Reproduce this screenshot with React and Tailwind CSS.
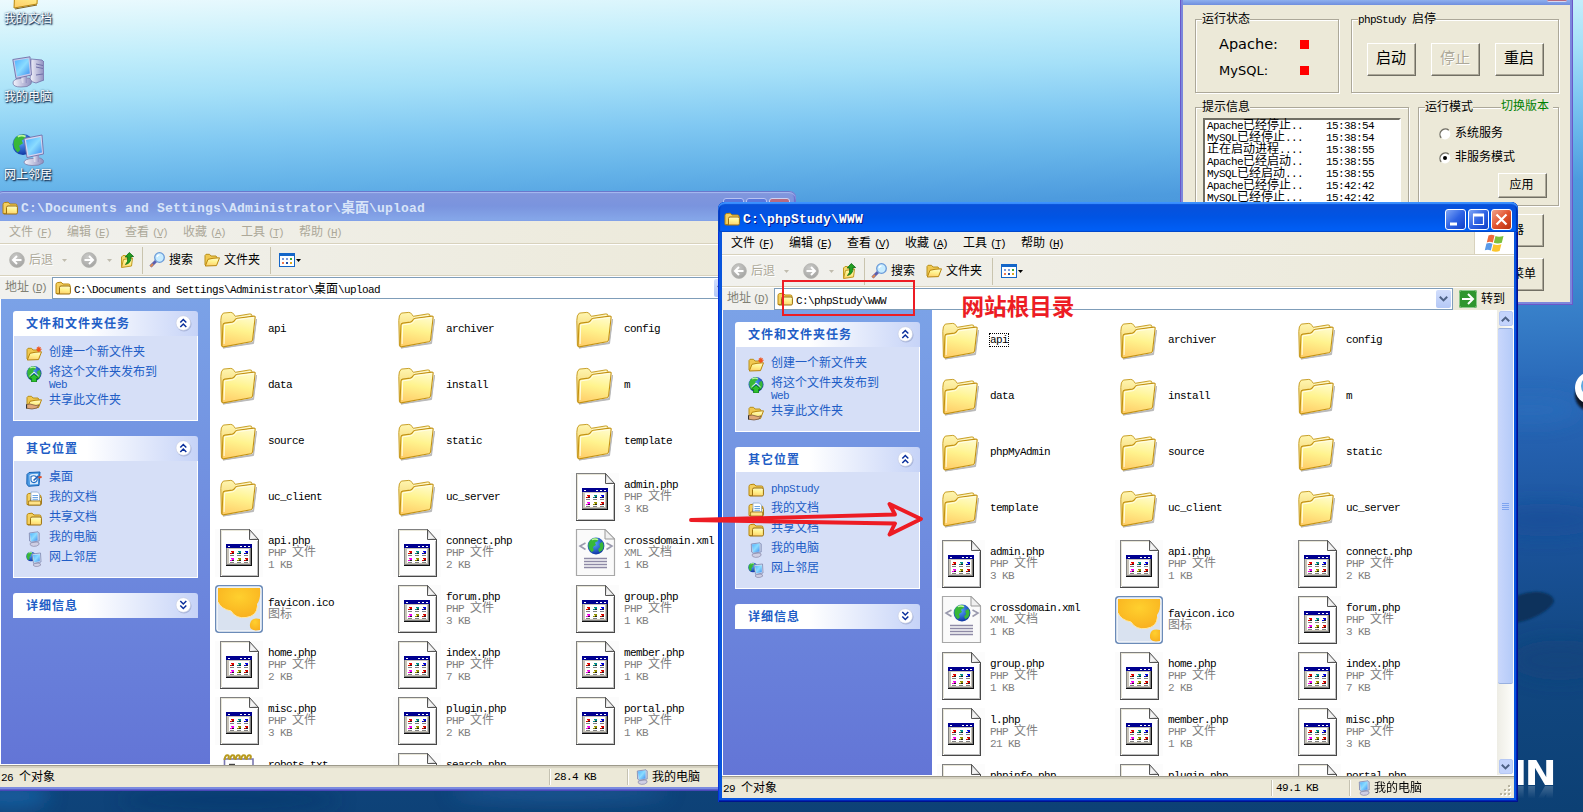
import React from "react";

/* ---------- text ---------- */

function T({ children, title }) {
  const runs = String(children).split(/([\x20-\x7e]+)/).filter(Boolean);
  return (
    <span className="whitespace-pre">
      {runs.map((r, i) =>
        /^[\x20-\x7e]/.test(r) ? (
          <span key={i} className={title ? "text-[13px] tracking-[0.2px]" : "text-[11px] tracking-[-0.6px]"}>
            {r}
          </span>
        ) : (
          <span key={i}>{r}</span>
        )
      )}
    </span>
  );
}

/* ---------- shared gradients ---------- */

function Defs() {
  return (
    <svg width="0" height="0" className="absolute">
      <defs>
        <linearGradient id="fFront" x1="0.6" y1="0" x2="0.4" y2="1">
          <stop offset="0" stopColor="#fffbc9" />
          <stop offset="0.45" stopColor="#fff38e" />
          <stop offset="1" stopColor="#ffcf6a" />
        </linearGradient>
        <linearGradient id="fBack" x1="0" y1="0" x2="0" y2="1">
          <stop offset="0" stopColor="#fff6b0" />
          <stop offset="1" stopColor="#eec04a" />
        </linearGradient>
        <linearGradient id="screen" x1="0" y1="0" x2="1" y2="1">
          <stop offset="0" stopColor="#4fb0ff" />
          <stop offset="0.5" stopColor="#8bdcff" />
          <stop offset="1" stopColor="#3d8df0" />
        </linearGradient>
        <linearGradient id="metal" x1="0" y1="0" x2="1" y2="0">
          <stop offset="0" stopColor="#f4f4fc" />
          <stop offset="1" stopColor="#8f8fc0" />
        </linearGradient>
        <linearGradient id="fold" x1="0" y1="1" x2="1" y2="0">
          <stop offset="0" stopColor="#ffffff" />
          <stop offset="1" stopColor="#8a8a8a" />
        </linearGradient>
        <radialGradient id="globe" cx="0.4" cy="0.35" r="0.7">
          <stop offset="0" stopColor="#5aa8ff" />
          <stop offset="1" stopColor="#0a2f9e" />
        </radialGradient>
        <radialGradient id="blob" cx="0.5" cy="0.3" r="0.8">
          <stop offset="0" stopColor="#ffd02e" />
          <stop offset="1" stopColor="#f8ac1c" />
        </radialGradient>
        <radialGradient id="grayBall" cx="0.4" cy="0.3" r="0.8">
          <stop offset="0" stopColor="#cacac8" />
          <stop offset="1" stopColor="#a0a09e" />
        </radialGradient>
      </defs>
    </svg>
  );
}

/* ---------- large file icons, 48px cell ---------- */

function FolderIcon() {
  return (
    <svg width="48" height="48" viewBox="0 0 48 48" className="shrink-0">
      <path d="M8 43L38 37.5L41.500 14L38.500 38.500Z" fill="#777" stroke="#8c8c8c" strokeWidth="1" opacity="0.6" />
      <g transform="translate(4.8 6.5)">
        <path d="M1 9Q.9 3.500 3.500 1.600L11 .9Q13 .9 14 2.800L15.500 4.800L30 2.400Q32.200 2.200 32.200 4.200V9L3 34.500L1.600 34Z" fill="url(#fBack)" stroke="#c9a02a" />
        <path d="M16 6.500L30.500 4" stroke="#fffce0" fill="none" />
        <path d="M3.200 13.500Q3.300 12 5 11.600L12.500 10.600Q14 10.300 15 8.600Q15.800 7.100 17.500 6.800L34 4.600Q35.600 4.500 35.300 6.200L32.800 28.300Q32.600 29.800 31 30.200L3.600 35.400Q2.100 35.500 2.200 34Z" fill="url(#fFront)" stroke="#c39214" strokeWidth="1.1" />
        <path d="M4.300 32.500L4.900 13.400L13 12.200Q15.300 11.600 16.200 9.600L17.600 8.300L34 6" stroke="#fffde6" fill="none" />
      </g>
    </svg>
  );
}

const DOTS = [
  [16, 22, "#e00000"],
  [23, 22, "#008c8c"],
  [30, 22, "#0000e0"],
  [16, 29, "#f000f0"],
  [23, 29, "#909000"],
  [30, 29, "#d00000"],
];

function PhpIcon() {
  return (
    <svg width="48" height="48" viewBox="0 0 48 48" className="shrink-0 bg-[#fcfcfc]" shapeRendering="crispEdges">
      <path d="M5 0H35L44 10V48H5Z" fill="#fff" />
      <path d="M6.500 46V1.500H34" fill="none" stroke="#e8e6d8" />
      <path d="M5.500 48V.5H35" fill="none" stroke="#808080" />
      <path d="M43.500 10V47.500H5" fill="none" stroke="#484848" />
      <path d="M42.500 12V46.500H7" fill="none" stroke="#c0c0c0" />
      <g shapeRendering="auto">
        <path d="M34.500 .5V10.500H43.500Z" fill="url(#fold)" stroke="#555" strokeWidth="1" />
        <path d="M36 3.500V9H41Z" fill="#f4f4f4" />
      </g>
      <rect x="11" y="15" width="26" height="22" fill="#111" />
      <rect x="11" y="15" width="25" height="21" fill="#808080" />
      <rect x="12" y="19" width="23" height="16" fill="#c8c4b8" />
      <rect x="14" y="20" width="20" height="14" fill="#fff" />
      <rect x="11" y="15" width="26" height="4" fill="#000090" />
      <path d="M13 17H15M25 17H27M29 17H31M33 17H35" stroke="#fff" strokeWidth="1" />
      {DOTS.map(([x, y, c], i) => (
        <g key={i}>
          <rect x={x} y={y} width="3" height="2" fill={c} />
          <rect x={x - 1} y={y + 2} width="2" height="1" fill={c} />
          <rect x={x} y={y + 1} width="1" height="1" fill="#ffe9a0" />
          <rect x={x + 1} y={y + 2} width="2" height="1" fill="#222" />
          <rect x={x - 1} y={y + 4} width="4" height="1" fill="#808080" />
        </g>
      ))}
    </svg>
  );
}

function Globe({ cx, cy, r }) {
  const s = r / 8;
  return (
    <g transform={`translate(${cx} ${cy}) scale(${s})`}>
      <circle r="8" fill="url(#globe)" />
      <path d="M-7 -3Q-5 -8 1 -7.600L2 -5L-1 -3L0 -1L-3 1L-2 4L-4 6Q-8 3 -7 -3Z" fill="#38b838" />
      <path d="M3 -2L6 -4Q8.500 0 6 4L3 6L2 3L4 1Z" fill="#38b838" />
      <path d="M-4 -6Q-1 -7.500 2 -6" stroke="#bff5a0" fill="none" strokeWidth="1.4" />
    </g>
  );
}

function XmlIcon() {
  return (
    <svg width="48" height="48" viewBox="0 0 48 48" className="shrink-0">
      <path d="M5.500 .5H34L43.500 10V46.500H5.500Z" fill="#fafafa" stroke="#a8a8a8" strokeWidth="1.2" />
      <path d="M34 .5V10H43.500Z" fill="#f0f0f0" stroke="#999" />
      <path d="M14.500 14L9 17L14.500 20.500M35.500 14L41 17L35.500 20.500" fill="none" stroke="#9a9aae" strokeWidth="1.6" />
      <Globe cx={25} cy={17} r={8.4} />
      <path d="M13 29.500H36M13 32.500H36M13 35.500H36M13 38.500H36" stroke="#8e8aa6" strokeWidth="1.5" />
    </svg>
  );
}

function IcoIcon() {
  return (
    <svg width="48" height="48" viewBox="0 0 48 48" className="shrink-0">
      <rect x=".75" y=".75" width="46.5" height="46.5" rx="3" fill="#d9e2f0" stroke="#6b8bb8" strokeWidth="1.5" />
      <rect x="2" y="2" width="44" height="44" rx="2" fill="none" stroke="#fff" />
      <path d="M3 3H45Q46 14 42 19Q43 31 31 32.500Q21 34 16 26Q6 24 3 17Z" fill="url(#blob)" />
      <path d="M3 17Q6 24 16 26Q21 34 31 32.500Q42 31 42.500 21" fill="none" stroke="#ffe9a8" />
      <path d="M45 34Q36 32 35 39Q34 45 41 45.500L45 45Z" fill="url(#blob)" />
    </svg>
  );
}

function TxtIcon() {
  return (
    <svg width="48" height="48" viewBox="0 0 48 48" className="shrink-0">
      <path d="M9.500 6H38V44H9.500Z" fill="#fff" stroke="#7a78b0" strokeWidth="1.6" />
      <path d="M14 11.500H20" stroke="#444" strokeWidth="1.4" />
      {[11, 16.5, 22, 27.5, 33].map((x) => (
        <path key={x} d={`M${x - 1.5} 7Q${x - 1} 2 ${x + 1.5} 2.2Q${x + 4} 2.5 ${x + 2} 6`} fill="none" stroke="#b89a1e" strokeWidth="2" />
      ))}
    </svg>
  );
}

/* ---------- small icons, 16px ---------- */

function MiniFolder({ children }) {
  return (
    <svg width="16" height="16" viewBox="0 0 16 16" className="shrink-0">
      <path d="M1 13.500V4.500Q1 3 2.400 2.600L6 2.200L8 4H13.500Q15 4 15 5.500V13Z" fill="#f4d060" stroke="#b8860b" />
      <path d="M4.500 13.800V7.500Q4.500 6 6 6H14Q15.400 6 15.400 7.300V12.800Q15.400 13.900 14.200 14H1.800" fill="url(#fFront)" stroke="#9a7010" />
      {children}
    </svg>
  );
}

function OpenFolder({ children }) {
  return (
    <svg width="16" height="16" viewBox="0 0 16 16" className="shrink-0">
      <path d="M1 13V3.500L2 2.300H5.500L7 4H12L13 5.500V8" fill="#f0c850" stroke="#b8901c" />
      <path d="M1.300 14L4 7.300L9 6.300L15.500 5.800L12.500 13.600Z" fill="url(#fFront)" stroke="#b8860b" />
      {children}
    </svg>
  );
}

function ComputerMini() {
  return (
    <svg width="16" height="16" viewBox="0 0 16 16" className="shrink-0">
      <path d="M4 13Q4 11.500 7 11.500L11 11Q14 11.500 13 13.500Q11 15.600 7.500 15.400Q4 15 4 13Z" fill="#cfcfe4" stroke="#8888a8" strokeWidth=".7" />
      <path d="M3.300 2L12 .8L13.200 2V10L5 11.200L3.600 10Z" fill="#c6cfe8" stroke="#7b86b0" strokeWidth=".8" />
      <path d="M4 2.500L11.500 1.500V9.500L5 10.500Z" fill="url(#screen)" />
    </svg>
  );
}

function NetworkMini() {
  return (
    <svg width="16" height="16" viewBox="0 0 16 16" className="shrink-0">
      <Globe cx={5} cy={5.5} r={4.8} />
      <path d="M7 14Q8 12 12 12Q15.500 12.500 14.500 14.300Q12 16 9 15.400Z" fill="#cfcfe4" stroke="#8888a8" strokeWidth=".7" />
      <path d="M6 3L14.500 2L15 11L7.500 12.400Z" fill="#dfe6f6" stroke="#7b86b0" strokeWidth=".8" />
      <path d="M7 4L13.800 3.200V10.200L8.200 11.300Z" fill="url(#screen)" />
    </svg>
  );
}

function DesktopMini() {
  return (
    <svg width="16" height="16" viewBox="0 0 16 16" className="shrink-0">
      <path d="M1 3.500L3 1.500L14 1L13 14.500L2.500 15.300L.8 13Z" fill="#4a9ae4" stroke="#1760b0" />
      <path d="M3.500 4L6 3L12 2.700V13L4 13.500Z" fill="#dcecfc" />
      <path d="M5 5.500Q9 3.500 11 6.500Q12 11 8 11.600Q4.600 11.500 5 8Z" fill="#fff" stroke="#1c6cc4" strokeWidth="1.1" />
      <path d="M7.500 9.500L12.500 4.800" stroke="#2160b8" strokeWidth="1.6" />
      <path d="M12.400 6.400L15.600 6" stroke="#e0502a" strokeWidth="2" />
    </svg>
  );
}

function DocsMini() {
  return (
    <MiniFolder>
      <path d="M5 1H11.500L13.500 3V10H5Z" fill="#fff" stroke="#8aa8d0" strokeWidth=".8" />
      <path d="M6.500 4.500H12M6.500 6.500H12M6.500 8.300H12" stroke="#5c9be0" strokeWidth=".9" />
      <path d="M2.600 14V10H14.600V14Z" fill="#ffe38a" stroke="#9a7010" strokeWidth=".8" />
    </MiniFolder>
  );
}

const TaskIcons = {
  create: () => (
    <OpenFolder>
      <path d="M12.800 .6V6M10.200 3.200H15.600M11 1.400L14.600 5M14.600 1.400L11 5" stroke="#f0541c" strokeWidth="1.1" />
    </OpenFolder>
  ),
  publish: () => (
    <svg width="16" height="16" viewBox="0 0 16 16" className="shrink-0">
      <Globe cx={8} cy={7.5} r={7.5} />
      <path d="M8 8L12.800 12.500H10.500V16H5.600V12.500H3.200Z" fill="#2fc02f" stroke="#0b7a14" strokeWidth=".8" />
      <path d="M3.500 10L8 6L12.600 10" fill="none" stroke="#e8ffe8" strokeWidth="1" />
    </svg>
  ),
  share: () => (
    <OpenFolder>
      <path d="M.5 10.500L4 10L10 11.500L13 10.800L11 14L6 15L.5 14.200Z" fill="#e0a878" stroke="#6b4a30" strokeWidth=".7" />
      <path d="M.3 10.500V14.500" stroke="#333" strokeWidth="1.6" />
    </OpenFolder>
  ),
  desktop: DesktopMini,
  folder: MiniFolder,
  docs: DocsMini,
  computer: ComputerMini,
  network: NetworkMini,
};

function Ball({ flip }) {
  return (
    <svg width="16" height="16" viewBox="0 0 16 16" className="shrink-0">
      <circle cx="8" cy="8" r="7.4" fill="url(#grayBall)" stroke="#b5b5b1" strokeWidth=".8" />
      <g transform={flip ? "translate(16 0) scale(-1 1)" : undefined}>
        <path d="M12.500 8H4.500M8 4L4 8L8 12" fill="none" stroke="#fff" strokeWidth="2" />
      </g>
    </svg>
  );
}

function Caret({ color }) {
  return (
    <svg width="5" height="3" viewBox="0 0 5 3" className="shrink-0">
      <path d="M0 0H5L2.500 3Z" fill={color} />
    </svg>
  );
}

/* ---------- explorer window ---------- */

const MENU = [
  ["文件", "F"],
  ["编辑", "E"],
  ["查看", "V"],
  ["收藏", "A"],
  ["工具", "T"],
  ["帮助", "H"],
];

function TitleButton({ kind, active }) {
  const tone =
    kind === "close"
      ? active
        ? "border-white bg-linear-to-br from-[#f0a088] via-[#e2532e] to-[#b8300c]"
        : "border-[#cdd3f4] bg-[#b86a80]"
      : active
      ? "border-white bg-linear-to-br from-[#7fa4f4] via-[#2f63e4] to-[#0f3fc8]"
      : "border-[#b9c4f2] bg-[#5a76dc]";
  return (
    <div className={`flex h-[21px] w-[21px] items-center justify-center rounded-[3px] border ${tone}`}>
      <svg width="15" height="15" viewBox="0 0 15 15">
        {kind === "min" && <path d="M2 12H9" stroke="#fff" strokeWidth="3" />}
        {kind === "max" && <path d="M2 2.500H13M2.500 2V12.500H12.500V2" stroke="#fff" strokeWidth="1.2" fill="none" />}
        {kind === "max" && <path d="M2 3H13" stroke="#fff" strokeWidth="3" />}
        {kind === "close" && <path d="M2.500 2.500L12.500 12.500M12.500 2.500L2.500 12.500" stroke="#fff" strokeWidth="2.2" />}
      </svg>
    </div>
  );
}

function Panel({ title, down, items, bodyClass }) {
  return (
    <div className="w-[185px]">
      <div className="flex h-[25px] items-center justify-between rounded-t-[3px] bg-linear-to-r from-white from-40% to-[#c6d3f7] pr-1.5 pl-[13px]">
        <span className="pt-0.5 text-[12px] font-bold tracking-[1px] text-[#215dc6]">{title}</span>
        <svg width="17" height="17" viewBox="0 0 17 17">
          <circle cx="9" cy="9" r="7.6" fill="#a9b6dc" />
          <circle cx="8.3" cy="8" r="7.3" fill="#fff" stroke="#c4cbe0" strokeWidth=".6" />
          <path
            d={down ? "M5.3 4L8.3 7L11.3 4M5.3 8.5L8.3 11.5L11.3 8.5" : "M5.3 7.5L8.3 4.5L11.3 7.5M5.3 12L8.3 9L11.3 12"}
            fill="none"
            stroke="#0a2f9c"
            strokeWidth="1.5"
          />
        </svg>
      </div>
      {items && (
        <div className={`flex flex-col gap-1 border border-t-0 border-white bg-[#d6dff7] pt-[10px] pl-3 ${bodyClass}`}>
          {items.map(([icon, text, second]) => {
            const Icon = TaskIcons[icon];
            return (
              <div key={text} className="flex gap-[7px] text-[#215dc6]">
                <Icon />
                <div className={second ? "flex h-[24px] flex-col pt-px" : "h-4 pt-px"}>
                  <T>{text}</T>
                  {second && <T>{second}</T>}
                </div>
              </div>
            );
          })}
        </div>
      )}
    </div>
  );
}

function Item({ name, kb, focused }) {
  const ext = name.split(".")[1];
  const kinds = { php: [PhpIcon, "PHP 文件"], xml: [XmlIcon, "XML 文档"], ico: [IcoIcon, "图标"], txt: [TxtIcon, "文本文档"] };
  const [Icon, label] = ext ? kinds[ext] : [FolderIcon, null];
  return (
    <div className="flex h-12 w-[178px] items-center gap-[5px]">
      <Icon />
      <div className="flex flex-col items-start text-black">
        <span className={focused ? "outline-1 outline-dotted outline-black" : undefined}>
          <T>{name}</T>
        </span>
        {label && (
          <span className="text-[#808080]">
            <T>{label}</T>
          </span>
        )}
        {kb && (
          <span className="text-[#808080]">
            <T>{kb + " KB"}</T>
          </span>
        )}
      </div>
    </div>
  );
}

function Explorer({ active, place, path, places, files, focused, count, size }) {
  return (
    <section
      className={`absolute flex h-[600px] w-[800px] flex-col rounded-t-[7px] ${place} ${
        active
          ? "bg-[#0855dd] shadow-[inset_1px_0_0_#0831d9,inset_-1px_-1px_0_#00138c,inset_-2px_-2px_0_#0024b8]"
          : "bg-[#7b8be0] shadow-[inset_-1px_-1px_0_#4a48b8,inset_-2px_-2px_0_#5c62cc]"
      }`}
    >
      <header
        className={`flex h-[30px] shrink-0 items-center gap-[3px] rounded-t-[7px] pt-1 pr-1.5 pl-1.5 ${
          active
            ? "bg-linear-to-b from-[#0a50d8] via-[#0054e4] to-[#0060f8] shadow-[inset_0_2px_1px_#3c92ff,inset_0_-1px_1px_#0046c8,inset_2px_0_1px_#0038c0,inset_-2px_0_1px_#0030b0]"
            : "bg-linear-to-b from-[#8296dc] via-[#7a94de] to-[#86a8ea] shadow-[inset_0_1px_0_#6a78cc,inset_0_2px_1px_#a8baf0,inset_-2px_0_1px_#6a6ed0]"
        }`}
      >
        <MiniFolder />
        <span
          className={`grow text-[14px] leading-[16px] font-bold ${
            active ? "text-white [text-shadow:1px_1px_0_#0a1883]" : "text-[#d8e4f8]"
          }`}
        >
          <T title>{path}</T>
        </span>
        <div className="flex gap-0.5 pt-px">
          <TitleButton kind="min" active={active} />
          <TitleButton kind="max" active={active} />
          <TitleButton kind="close" active={active} />
        </div>
      </header>

      <div className="mx-1 mb-1 flex h-[566px] flex-col bg-linear-to-r from-[#f1f1ee] to-[#ece9d8]">
        <nav className="flex h-[23px] shrink-0 items-stretch border-b border-[#d8d2bd] pl-[9px]">
          {MENU.map(([label, key]) => (
            <span key={key} className={`flex w-[58px] items-center gap-[3px] pt-0.5 ${active ? "text-black" : "text-[#aca899]"}`}>
              {label}
              <span className="text-[11px] tracking-[-1.6px]">
                (<u className="underline-offset-1">{key}</u>)
              </span>
            </span>
          ))}
          <span className="grow" />
          <span className="flex w-10 items-center justify-center border-l border-[#d8d2bd] bg-white">
            <svg width="21" height="19" viewBox="0 0 21 19">
              <path d="M4.500 1.500Q7.500 0 10.500 1.600L8.800 8.600Q6 7.200 2.800 8.400Z" fill="#ee6a3c" />
              <path d="M11.500 2Q14.500 3.600 19.500 2L17.800 8.800Q14 10.200 9.800 8.800Z" fill="#7cc03c" />
              <path d="M2.400 9.600Q5.500 8.400 8.500 9.800L6.800 16.600Q4 15 .8 16.200Z" fill="#5a9ae8" />
              <path d="M9.400 10.200Q13 11.800 17.400 10.200L15.600 17Q12 18.600 7.800 17Z" fill="#fbc52c" />
            </svg>
          </span>
        </nav>

        <div className="flex h-8 shrink-0 items-center border-t border-b border-t-white border-b-[#d8d2bd] pl-[9px]">
          <Ball />
          <span className="ml-1 w-[33px] pt-0.5 text-[#aca899] [text-shadow:1px_1px_0_#fff]">后退</span>
          <Caret color="#c0bcae" />
          <span className="ml-[14px] flex">
            <Ball flip />
          </span>
          <span className="ml-[10px] flex">
            <Caret color="#c0bcae" />
          </span>
          <span className="ml-[7px] flex">
            <svg width="16" height="18" viewBox="0 0 16 18">
              <path d="M2.500 16V6L4 4.500H6.500L7.500 6H12V9" fill="#f4d870" stroke="#c09a20" />
              <path d="M2.500 16.500L4.500 8.500L13.500 7L12.500 15Z" fill="url(#fFront)" stroke="#c09a20" />
              <path d="M6.500 13.500Q9.500 11 8.600 6H6.200L10.300 1.500L14.600 5.500H12Q12.500 12 6.500 13.500Z" fill="#22a022" stroke="#0c6a10" strokeWidth=".8" />
            </svg>
          </span>
          <span className="ml-[7px] h-[27px] w-px bg-[#c9c4ae]" />
          <span className="ml-1.5 flex">
            <svg width="17" height="16" viewBox="0 0 17 16">
              <path d="M1.500 14.500L7 9" stroke="#5b5fae" strokeWidth="3" />
              <path d="M1.500 14.500L4 12" stroke="#e08a50" strokeWidth="2" />
              <circle cx="10.500" cy="5.500" r="4.800" fill="#c8ecff" stroke="#6a9ad8" strokeWidth="1.3" />
              <path d="M8 5Q8.500 3 10.500 2.800" stroke="#fff" fill="none" strokeWidth="1.3" />
            </svg>
          </span>
          <span className="ml-[3px] w-[35px] pt-0.5 text-black">搜索</span>
          <OpenFolder />
          <span className="ml-1 w-[46px] pt-0.5 text-black">文件夹</span>
          <span className="h-[27px] w-px bg-[#c9c4ae]" />
          <span className="ml-2 flex">
            <svg width="16" height="14" viewBox="0 0 16 14" shapeRendering="crispEdges">
              <rect width="16" height="14" fill="#1466c8" />
              <rect x="1" y="3" width="14" height="10" fill="#fff" />
              <path d="M3 6H5M7 6H9" stroke="#7a9ad8" strokeWidth="2" />
              <path d="M11 6H13" stroke="#3aa83a" strokeWidth="2" />
              <path d="M3 10H5" stroke="#f07a50" strokeWidth="2" />
              <path d="M7 10H9" stroke="#2050a8" strokeWidth="2" />
              <path d="M11 10H13" stroke="#e0a820" strokeWidth="2" />
            </svg>
          </span>
          <span className="ml-px flex">
            <Caret color="#000" />
          </span>
        </div>

        <div className="flex h-[23px] shrink-0 border-t border-white">
          <span className="flex w-[52px] items-center gap-0.5 pb-px pl-[5px] text-[#808074]">
            地址
            <span className="text-[11px] tracking-[-1.6px]">
              (<u className="underline-offset-1">D</u>)
            </span>
          </span>
          <div className="flex h-[22px] w-[679px] items-center border border-[#7f9db9] bg-white pr-px pl-0.5 text-black">
            <MiniFolder />
            <span className="ml-[3px] grow pt-[3px]">
              <T>{path}</T>
            </span>
            <span className="flex h-[18px] w-[15px] items-center justify-center rounded-[2px] bg-linear-to-b from-[#d2defc] to-[#b4c8f6]">
              <svg width="9" height="6" viewBox="0 0 9 6">
                <path d="M.8 .8L4.500 4.400L8.200 .8" fill="none" stroke="#4d6185" strokeWidth="2" />
              </svg>
            </span>
          </div>
          <span className="flex items-center gap-1 pl-[6px] text-black">
            <svg width="18" height="18" viewBox="0 0 18 18">
              <rect width="18" height="18" rx="2" fill="#2f962f" />
              <rect x=".5" y=".5" width="17" height="17" rx="2" fill="none" stroke="#8cc88c" />
              <path d="M3 9H14M9 4L14 9L9 14" fill="none" stroke="#fff" strokeWidth="2" />
            </svg>
            <span className="pt-0.5">转到</span>
          </span>
        </div>

        <div className="flex h-[466px] shrink-0 bg-white">
          <aside className="ml-px flex h-[465px] w-[209px] shrink-0 flex-col gap-[15px] bg-linear-to-b from-[#7ba2e7] to-[#6375d6] pt-3 pl-3">
            <Panel
              title="文件和文件夹任务"
              bodyClass="h-[85px]"
              items={[
                ["create", "创建一个新文件夹"],
                ["publish", "将这个文件夹发布到", "Web"],
                ["share", "共享此文件夹"],
              ]}
            />
            <Panel title="其它位置" bodyClass="h-[117px]" items={places} />
            <Panel title="详细信息" down />
          </aside>
          <div className="flex h-[466px] w-[565px] flex-wrap content-start gap-y-2 overflow-hidden pt-1.5 pl-[5px]">
            {files.map(([name, kb]) => (
              <Item key={name} name={name} kb={kb} focused={focused === name} />
            ))}
          </div>
          <div className="flex h-[465px] w-[17px] flex-col items-center bg-linear-to-r from-[#eeede5] to-[#fefefb] pt-px">
            <span className="flex h-[15px] w-[14px] items-center justify-center rounded-[2px] border border-[#b6c8f4] bg-[#c4d4fc]">
              <svg width="9" height="6" viewBox="0 0 9 6">
                <path d="M.8 5.200L4.500 1.600L8.200 5.200" fill="none" stroke="#4d6185" strokeWidth="2" />
              </svg>
            </span>
            <span className="mt-0.5 flex h-[356px] w-[15px] flex-col items-center justify-center gap-px rounded-[2px] border-y border-[#98b0e0] bg-linear-to-r from-[#c9d7fc] to-[#b4caf8]">
              <i className="h-px w-[7px] bg-[#7ea4f0]" />
              <i className="h-px w-[7px] bg-[#7ea4f0]" />
              <i className="h-px w-[7px] bg-[#7ea4f0]" />
              <i className="h-px w-[7px] bg-[#7ea4f0]" />
            </span>
            <span className="mt-auto mb-px flex h-[15px] w-[14px] items-center justify-center rounded-[2px] border border-[#b6c8f4] bg-[#c4d4fc]">
              <svg width="9" height="6" viewBox="0 0 9 6">
                <path d="M.8 .8L4.500 4.400L8.200 .8" fill="none" stroke="#4d6185" strokeWidth="2" />
              </svg>
            </span>
          </div>
        </div>

        <footer className="flex h-[22px] shrink-0 items-center border-t border-[#9d9a8b] bg-[#ece9d8] pl-px text-black shadow-[inset_0_2px_1px_#d4d0c0]">
          <span className="w-[548px] pt-0.5">
            <T>{count + " 个对象"}</T>
          </span>
          <span className="flex h-4 w-[78px] items-center border-l border-[#c5c2b2] pt-px pl-1 shadow-[inset_1px_0_0_#fff]">
            <T>{size + " KB"}</T>
          </span>
          <span className="flex h-4 w-[150px] items-center gap-0.5 border-l border-[#c5c2b2] pl-1.5 shadow-[inset_1px_0_0_#fff]">
            <ComputerMini />
            <span className="pt-0.5">我的电脑</span>
          </span>
          <svg width="13" height="13" viewBox="0 0 13 13" className="mt-1.5">
            {[[9, 1], [5, 5], [9, 5], [1, 9], [5, 9], [9, 9]].map(([x, y]) => (
              <g key={`${x}-${y}`}>
                <rect x={x + 1} y={y + 1} width="2" height="2" fill="#fff" />
                <rect x={x} y={y} width="2" height="2" fill="#b8b4a0" />
              </g>
            ))}
          </svg>
        </footer>
      </div>
    </section>
  );
}

/* ---------- phpStudy window ---------- */

function Group({ title, extra, className, children }) {
  return (
    <fieldset className={`min-w-0 border border-[#aca899] shadow-[1px_1px_0_#fff,inset_1px_1px_0_#fff] ${className}`}>
      <legend className="ml-1.5 flex h-3 items-center pt-px">
        <span className="bg-[#ece9d8] text-black">
          <T>{title}</T>
        </span>
      </legend>
      {extra}
      {children}
    </fieldset>
  );
}

function Btn({ className, children }) {
  return (
    <div
      className={`flex items-center border border-t-white border-r-[#716f64] border-b-[#716f64] border-l-white bg-[#ece9d8] shadow-[inset_-1px_-1px_0_#aca899] ${className}`}
    >
      {children}
    </div>
  );
}

function Radio({ on, children }) {
  return (
    <div className="flex h-6 items-center gap-1">
      <svg width="12" height="12" viewBox="0 0 12 12">
        <circle cx="6" cy="6" r="5.4" fill="#fff" />
        <path d="M2.200 9.800A5.400 5.400 0 0 1 9.800 2.200" fill="none" stroke="#716f64" strokeWidth="1.3" />
        {on && <circle cx="6" cy="6" r="2" fill="#000" />}
      </svg>
      {children}
    </div>
  );
}

const LOG = [
  ["Apache已经停止..", "15:38:54"],
  ["MySQL已经停止...", "15:38:54"],
  ["正在启动进程....", "15:38:55"],
  ["Apache已经启动..", "15:38:55"],
  ["MySQL已经启动...", "15:38:55"],
  ["Apache已经停止..", "15:42:42"],
  ["MySQL已经停止...", "15:42:42"],
];

function PhpStudy() {
  return (
    <section className="absolute top-0 left-[1180px] flex h-[305px] w-[393px] flex-col border-x border-b border-[#6a58c8] bg-[#7b87dc] px-0.5 pb-0.5 text-black">
      <div className="flex h-[5px] shrink-0 justify-end bg-linear-to-b from-[#8fb0ee] to-[#6f8ede] pr-[3px]">
        <span className="h-[2px] w-5 rounded-b-[2px] border-b border-[#d8d8f0] bg-[#b86a80]" />
      </div>
      <div className="h-[297px] bg-[#ece9d8] pt-2 pl-3">
        <div className="flex gap-3">
          <Group title="运行状态" className="h-[80px] w-[144px]">
            <div className="grid grid-cols-[81px_9px] gap-y-1 pt-[7px] pl-[23px] font-['DejaVu_Sans',sans-serif]">
              <span className="flex h-[23px] items-center text-[14.5px]">Apache:</span>
              <i className="mt-2 h-[9px] w-[9px] bg-[#ff0000]" />
              <span className="flex h-[23px] items-center text-[13px]">MySQL:</span>
              <i className="mt-[7px] h-[9px] w-[9px] bg-[#ff0000]" />
            </div>
          </Group>
          <Group title="phpStudy 启停" className="h-[80px] w-[208px]">
            <div className="flex gap-[15px] pt-[18px] pl-[15px] text-[15px]">
              <Btn className="h-[33px] w-[49px] justify-center pr-px">启动</Btn>
              <Btn className="h-[33px] w-[49px] justify-center pr-px text-[#aca899] [text-shadow:1px_1px_0_#fff]">停止</Btn>
              <Btn className="h-[33px] w-[49px] justify-center pr-px">重启</Btn>
            </div>
          </Group>
        </div>
        <div className="mt-2 flex gap-[9px]">
          <Group title="提示信息" className="h-[190px] w-[214px]">
            <div className="mt-[5px] ml-[7px] h-[160px] w-[198px] border-2 border-t-[#716f64] border-r-white border-b-white border-l-[#716f64] bg-white pl-0.5">
              {LOG.map(([msg, time], i) => (
                <div key={i} className="flex h-3 leading-3">
                  <span className="w-[119px]">
                    <T>{msg}</T>
                  </span>
                  <T>{time}</T>
                </div>
              ))}
            </div>
          </Group>
          <div className="w-[141px]">
            <Group
              title="运行模式"
              className="h-[105px] w-[141px]"
              extra={
                <div className="-mt-3 ml-[82px] flex h-3 w-[52px] items-center bg-[#ece9d8] text-[#008000]">切换版本</div>
              }
            >
              <div className="flex flex-col pt-[9px] pl-5">
                <Radio>系统服务</Radio>
                <Radio on>非服务模式</Radio>
              </div>
              <Btn className="mt-[3px] ml-[79px] h-[25px] w-[49px] justify-center pr-0.5">应用</Btn>
            </Group>
            <Btn className="mt-2 h-[33px] w-[126px] justify-end pr-[19px]">
              <T>MySQL管理器</T>
            </Btn>
            <Btn className="mt-[11px] h-[33px] w-[126px] justify-end pr-[7px]">其他选项菜单</Btn>
          </div>
        </div>
      </div>
    </section>
  );
}

/* ---------- desktop ---------- */

function Computer32() {
  return (
    <svg width="32" height="32" viewBox="0 0 32 32">
      <path d="M19 3L30 4L32 6V24L24 27L18 25Z" fill="url(#metal)" stroke="#6f6fa8" strokeWidth=".8" />
      <path d="M24 8L31 9.500M24 11L31 12.500M24 19L31 18" stroke="#7070a8" />
      <path d="M1 27Q1 23 8 22.500L17 22Q21 24 19 28Q16 31.500 9 31Q1 31 1 27Z" fill="url(#metal)" stroke="#7c7ca8" strokeWidth=".8" />
      <path d="M9 20H15V27H10Z" fill="url(#metal)" />
      <path d="M.8 3.500L18 .8L19.500 19L4 22.500Z" fill="#c9c9ea" stroke="#6f6fa8" strokeWidth=".9" />
      <path d="M2.600 4.800L16.500 2.600L17.800 17.500L5 20.500Z" fill="url(#screen)" />
    </svg>
  );
}

function Network32() {
  return (
    <svg width="32" height="32" viewBox="0 0 32 32">
      <Globe cx={11} cy={10.5} r={10.5} />
      <path d="M12 28Q13 25 20 24.500L28 24Q33 26 31 29Q27 32 20 31.500Q12 31 12 28Z" fill="url(#metal)" stroke="#7c7ca8" strokeWidth=".8" />
      <path d="M21 20H27V28H22Z" fill="url(#metal)" />
      <path d="M12 4.500L30 1L31.500 20L15 23.500Z" fill="#d5d5f0" stroke="#6f6fa8" strokeWidth=".9" />
      <path d="M14 6L28.600 3L30 18.500L16.500 21.500Z" fill="url(#screen)" />
    </svg>
  );
}

function DesktopIcon({ label, children }) {
  return (
    <div className="flex h-[78px] w-14 flex-col items-center gap-1">
      {children}
      <span className="text-[12px] leading-3 text-white [text-shadow:1px_1px_1px_#1c3a5c,1px_1px_2px_#24486c,0_0_2px_#4a6a88]">{label}</span>
    </div>
  );
}

function Wallpaper() {
  return (
    <svg width="1583" height="812" viewBox="0 0 1583 812" className="absolute top-0 left-0">
      <defs>
        <filter id="soft">
          <feGaussianBlur stdDeviation="9" />
        </filter>
        <filter id="edge">
          <feGaussianBlur stdDeviation="1" />
        </filter>
      </defs>
      <g filter="url(#soft)">
        <ellipse cx="230" cy="800" rx="110" ry="12" fill="#0d3468" opacity=".45" />
        <ellipse cx="560" cy="793" rx="110" ry="6" fill="#2f6fb4" opacity=".6" />
        <ellipse cx="10" cy="796" rx="40" ry="12" fill="#1c64a8" opacity=".8" />
        <ellipse cx="1545" cy="520" rx="60" ry="16" fill="#184a96" opacity=".5" />
        <ellipse cx="1530" cy="410" rx="50" ry="14" fill="#2d70c0" opacity=".5" />
        <ellipse cx="1560" cy="660" rx="50" ry="20" fill="#123f7a" opacity=".5" />
      </g>
      <path d="M1500 606Q1520 590 1540 592Q1554 594 1554 602Q1548 612 1530 619Q1514 625 1500 624Z" fill="#08335c" filter="url(#edge)" />
      <ellipse cx="1590" cy="395" rx="15" ry="16" fill="#0a1626" filter="url(#edge)" />
      <ellipse cx="1590" cy="388" rx="15" ry="16" fill="#fff" />
      <ellipse cx="1590" cy="386" rx="9" ry="10" fill="#5aa8e0" />
    </svg>
  );
}

const A_FILES = [
  ["api"], ["archiver"], ["config"],
  ["data"], ["install"], ["m"],
  ["source"], ["static"], ["template"],
  ["uc_client"], ["uc_server"], ["admin.php", 3],
  ["api.php", 1], ["connect.php", 2], ["crossdomain.xml", 1],
  ["favicon.ico"], ["forum.php", 3], ["group.php", 1],
  ["home.php", 2], ["index.php", 7], ["member.php", 1],
  ["misc.php", 3], ["plugin.php", 2], ["portal.php", 1],
  ["robots.txt", 1], ["search.php", 1],
];

const B_FILES = [
  ["api"], ["archiver"], ["config"],
  ["data"], ["install"], ["m"],
  ["phpMyAdmin"], ["source"], ["static"],
  ["template"], ["uc_client"], ["uc_server"],
  ["admin.php", 3], ["api.php", 1], ["connect.php", 2],
  ["crossdomain.xml", 1], ["favicon.ico"], ["forum.php", 3],
  ["group.php", 1], ["home.php", 2], ["index.php", 7],
  ["l.php", 21], ["member.php", 1], ["misc.php", 3],
  ["phpinfo.php", 1], ["plugin.php", 2], ["portal.php", 1],
];

const COMMON = [
  ["docs", "我的文档"],
  ["folder", "共享文档"],
  ["computer", "我的电脑"],
  ["network", "网上邻居"],
];

export default function App() {
  return (
    <main className="relative h-[812px] w-[1583px] overflow-hidden bg-[linear-gradient(178deg,#ecfafe_0px,#daf5fc_25px,#c0edfb_60px,#a5e0f8_100px,#80c8f2_150px,#66b4e9_190px,#4d9bde_235px,#3d88cf_335px,#2b6cbb_430px,#2460ae_500px,#1a5299_600px,#124883_700px,#0c4074_866px)] font-['Liberation_Mono','Noto_Sans_CJK_SC',monospace] text-[12px] leading-3">
      <Defs />
      <Wallpaper />
      <div className="absolute top-[757px] left-[1512.5px] origin-left scale-x-[1.15] font-['DejaVu_Sans',sans-serif] text-[33px] leading-[34px] font-bold tracking-[-2px] text-white [-webkit-box-reflect:below_-11px_linear-gradient(transparent_45%,rgba(255,255,255,0.3))]">
        IN
      </div>

      <div className="-mt-[22px] flex flex-col">
        <DesktopIcon label="我的文档">
          <svg width="32" height="32" viewBox="0 0 32 32">
            <path d="M2 30L3 8L14 4L26 6L25 26Z" fill="url(#fFront)" stroke="#b8860b" />
            <path d="M3 31L25 27" stroke="#80601a" strokeWidth="1" />
          </svg>
        </DesktopIcon>
        <DesktopIcon label="我的电脑">
          <Computer32 />
        </DesktopIcon>
        <DesktopIcon label="网上邻居">
          <Network32 />
        </DesktopIcon>
      </div>

      <PhpStudy />
      <Explorer
        place="top-[191px] -left-1"
        path="C:\Documents and Settings\Administrator\桌面\upload"
        places={[["desktop", "桌面"], ...COMMON]}
        files={A_FILES}
        count="26"
        size="28.4"
      />
      <Explorer
        active
        place="top-[202px] left-[718px]"
        path="C:\phpStudy\WWW"
        places={[["folder", "phpStudy"], ...COMMON]}
        files={B_FILES}
        focused="api"
        count="29"
        size="49.1"
      />

      <div className="absolute top-[280px] left-[782px] h-[36px] w-[133px] border-2 border-[#ed1c24]" />
      <div className="absolute top-[296px] left-[961.5px] text-[22.6px] leading-[26px] font-bold text-[#ed1c24]">网站根目录</div>
      <svg className="absolute top-[495px] left-[685px]" width="245" height="48" viewBox="685 495 245 48">
        <path d="M691 520L895 514.500L889.500 504L921 519L889.500 534.500L895 523.500Z" fill="none" stroke="#ed1c24" strokeWidth="3.900" strokeLinejoin="round" />
      </svg>
    </main>
  );
}
